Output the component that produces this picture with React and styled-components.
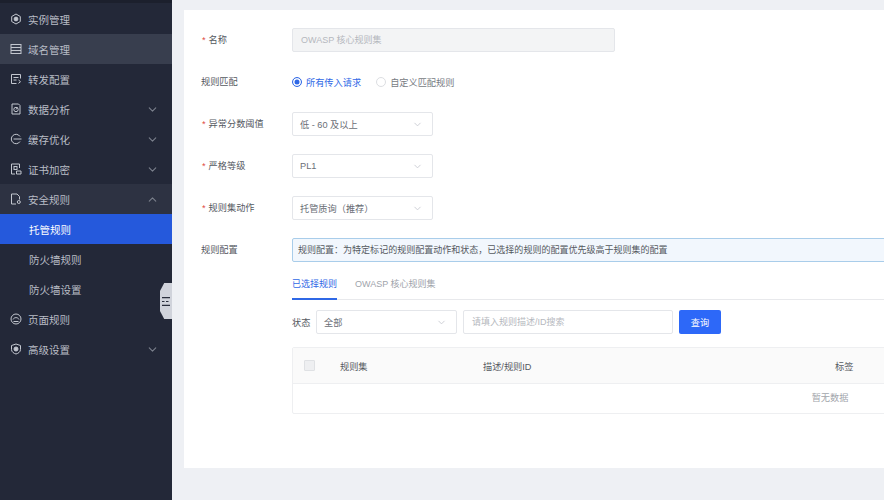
import React from 'react'
import styled, { createGlobalStyle } from 'styled-components'
import { ChevronDown, ChevronUp } from 'lucide-react'

const Global = createGlobalStyle`
  html, body {
    margin: 0;
    padding: 0;
    height: 100%;
    overflow: hidden;
  }
  * {
    box-sizing: border-box;
  }
  body {
    font-family: "Liberation Sans", "Noto Sans CJK SC", sans-serif;
    font-size: 9px;
    color: #555a63;
  }
`

const Page = styled.div`
  display: flex;
  width: 884px;
  height: 500px;
  overflow: hidden;
  background: #eef0f4;
`

const Sidebar = styled.nav`
  position: relative;
  flex: 0 0 172px;
  padding-top: 4px;
  background: #232838;
  border-top: 3px solid #1c202d;
`

const MenuRow = styled.div`
  display: flex;
  align-items: center;
  height: 30px;
  margin-top: ${p => (p.$first ? '-3px' : '0')};
  padding: 0 13px 0 10px;
  font-size: 10.5px;
  color: ${p => (p.$active ? '#ffffff' : '#b9bdc6')};
  background: ${p => {
    if (p.$active) return '#2559dc'
    if (p.$hover) return '#383e4e'
    if (p.$open) return '#2d3242'
    return 'transparent'
  }};
  padding-left: ${p => (p.$sub ? '29px' : '10px')};

  svg.lead {
    flex: 0 0 12px;
    margin-right: 6px;
  }
  span {
    flex: 1;
  }
`

const Collapse = styled.div`
  position: absolute;
  right: 0;
  top: 280px;
  width: 12px;
  height: 36px;
  display: flex;
  align-items: center;
  justify-content: center;
  background: #d0d3db;
  clip-path: polygon(100% 0, 35% 0, 0 22%, 0 78%, 35% 100%, 100% 100%);
`

const Main = styled.main`
  flex: 1;
  min-width: 0;
  padding: 10px 0 32px 12px;
  overflow: hidden;
`

const Card = styled.section`
  height: 458px;
  padding: 18px 0 0 17px;
  background: #ffffff;
  display: flex;
  flex-direction: column;
  gap: 18px;
  overflow: hidden;
`

const FormRow = styled.div`
  display: flex;
  align-items: flex-start;
`

const Label = styled.label`
  flex: 0 0 91px;
  height: 24px;
  line-height: 24px;
  color: #55595f;
  font-size: 9.2px;

  &::before {
    content: ${p => (p.$required ? '"*"' : 'none')};
    color: #e0493f;
    margin-right: 3px;
    margin-left: 1px;
  }
`

const TextInput = styled.div`
  width: ${p => p.$width}px;
  height: 24px;
  line-height: 22px;
  padding: 0 8px;
  border: 1px solid #e4e6ea;
  border-radius: 2px;
  font-size: 9px;
  color: ${p => (p.$muted ? '#b5b8be' : '#5f636b')};
  background: ${p => (p.$disabled ? '#f3f4f5' : '#ffffff')};
`

const Select = styled.div`
  width: ${p => p.$width}px;
  height: 24px;
  display: flex;
  align-items: center;
  justify-content: space-between;
  padding: 0 9px 0 7px;
  border: 1px solid #e4e6ea;
  border-radius: 2px;
  background: #ffffff;
  font-size: 9.2px;
  color: #6a6e76;

  svg {
    color: #c9ccd2;
  }
`

const RadioGroup = styled.div`
  display: flex;
  align-items: center;
  height: 24px;
  gap: 15px;
`

const Radio = styled.div`
  display: flex;
  align-items: center;
  gap: 4px;
  font-size: 9.2px;
  color: ${p => (p.$checked ? '#2f68e6' : '#777b83')};

  i {
    display: block;
    width: 10px;
    height: 10px;
    border-radius: 50%;
    background: #ffffff;
    border: 1px solid ${p => (p.$checked ? '#2f68e6' : '#dcdee2')};
    box-shadow: ${p => (p.$checked ? 'inset 0 0 0 1.5px #fff, inset 0 0 0 5px #2f68e6' : 'none')};
  }
`

const RuleConfig = styled.div`
  flex: 0 0 1076px;
  width: 1076px;
`

const Alert = styled.div`
  height: 24px;
  line-height: 22px;
  padding: 0 5px;
  border: 1px solid #a9cdea;
  border-radius: 2px;
  background: #f2f7fd;
  font-size: 9.03px;
  color: #55595f;
`

const Tabs = styled.div`
  display: flex;
  gap: 18px;
  height: 38px;
  border-bottom: 1px solid #e8e9ec;
`

const Tab = styled.div`
  padding-top: 15px;
  height: 38px;
  font-size: 9px;
  line-height: 15px;
  color: ${p => (p.$active ? '#2f68e6' : '#a0a4ab')};
  border-bottom: 2px solid ${p => (p.$active ? '#2f68e6' : 'transparent')};
`

const Filters = styled.div`
  display: flex;
  align-items: center;
  margin-top: 10px;
  gap: 6px;
  font-size: 9.2px;
  color: #55595f;
`

const FilterLabel = styled.span`
  width: 18px;
  white-space: nowrap;
`

const QueryButton = styled.button`
  width: 42px;
  height: 24px;
  padding: 0;
  border: 0;
  border-radius: 2px;
  background: #2d68f8;
  color: #ffffff;
  font: inherit;
  font-size: 9.2px;
`

const Table = styled.div`
  margin-top: 13px;
  border: 1px solid #eeeff1;
  border-radius: 2px;
`

const HeadRow = styled.div`
  display: grid;
  grid-template-columns: 47px 143px 352px 1fr;
  align-items: center;
  height: 36px;
  background: #fafafa;
  border-bottom: 1px solid #eeeff1;
  font-size: 9.2px;
  color: #55595f;
`

const Check = styled.div`
  width: 11px;
  height: 11px;
  margin-left: 11px;
  border: 1px solid #dfe1e4;
  border-radius: 1px;
  background: #eeeff1;
`

const Empty = styled.div`
  height: 29px;
  line-height: 29px;
  text-align: center;
  font-size: 9.2px;
  color: #a2a5ab;
`

const Icon = ({ children }) => (
  <svg className="lead" width="12" height="12" viewBox="0 0 12 12" fill="none" stroke="#c3c7cf" strokeWidth="1">
    {children}
  </svg>
)

const icons = {
  instance: (
    <Icon>
      <path d="M6 1l4.300 2.500v5L6 11 1.700 8.500v-5z" />
      <circle cx="6" cy="6" r="1.900" fill="#c3c7cf" />
    </Icon>
  ),
  domain: (
    <Icon>
      <rect x="1" y="1.500" width="10" height="9" />
      <path d="M1 4.500h10M1 7.500h10" />
    </Icon>
  ),
  forward: (
    <Icon>
      <path d="M10.500 5.500v-4h-9v9h5" />
      <path d="M3.500 4.500h5M3.500 7h3M8.500 7l2 1.700-2 1.700" />
    </Icon>
  ),
  data: (
    <Icon>
      <path d="M2 1h6.500L10 2.500V11H2z" />
      <circle cx="6" cy="6.500" r="2.200" />
      <path d="M6 6.500l1.500-2" />
    </Icon>
  ),
  cache: (
    <Icon>
      <path d="M10 3.500A4.700 4.700 0 1 0 10 8.500" />
      <path d="M3.500 6h8" />
    </Icon>
  ),
  cert: (
    <Icon>
      <path d="M9.500 5V1h-8v10h3.500" />
      <rect x="4" y="3.500" width="3" height="3" />
      <path d="M6.500 8h4.500v3H6.500z" />
    </Icon>
  ),
  security: (
    <Icon>
      <path d="M6 11H1.500V1H7l2.500 2.500V6.500" />
      <circle cx="8.800" cy="9" r="1.500" />
    </Icon>
  ),
  page: (
    <Icon>
      <circle cx="6" cy="6" r="5" />
      <path d="M3 6.500c1-2.500 5-2.500 6 0M3.500 8.500h5" />
    </Icon>
  ),
  advanced: (
    <Icon>
      <path d="M6 1l4.500 1.500v4C10.500 9 8 10.500 6 11 4 10.500 1.500 9 1.500 6.500v-4z" />
      <circle cx="6" cy="6" r="2" fill="#c3c7cf" />
    </Icon>
  ),
}

const Arrow = ({ up }) =>
  up ? <ChevronUp size={13} color="#7b808c" /> : <ChevronDown size={13} color="#7b808c" />

const menu = [
  { icon: 'instance', text: '实例管理' },
  { icon: 'domain', text: '域名管理', hover: true },
  { icon: 'forward', text: '转发配置' },
  { icon: 'data', text: '数据分析', arrow: true },
  { icon: 'cache', text: '缓存优化', arrow: true },
  { icon: 'cert', text: '证书加密', arrow: true },
  { icon: 'security', text: '安全规则', up: true, open: true },
  { text: '托管规则', sub: true, active: true },
  { text: '防火墙规则', sub: true },
  { text: '防火墙设置', sub: true },
  { icon: 'page', text: '页面规则' },
  { icon: 'advanced', text: '高级设置', arrow: true },
]

export default function App() {
  return (
    <Page>
      <Global />
      <Sidebar>
        {menu.map((m, i) => (
          <MenuRow key={m.text} $first={i === 0} $hover={m.hover} $open={m.open} $active={m.active} $sub={m.sub}>
            {m.icon && icons[m.icon]}
            <span>{m.text}</span>
            {m.arrow && <Arrow />}
            {m.up && <Arrow up />}
          </MenuRow>
        ))}
        <Collapse>
          <svg width="8" height="9" viewBox="0 0 8 9" fill="none" stroke="#2a2f3d" strokeWidth="1.200">
            <path d="M0 .6h8M0 8.400h8" />
            <path d="M0 4.500h8" strokeDasharray="2.500 1.500" />
          </svg>
        </Collapse>
      </Sidebar>
      <Main>
        <Card>
          <FormRow>
            <Label $required>名称</Label>
            <TextInput $width={323} $disabled $muted>OWASP 核心规则集</TextInput>
          </FormRow>
          <FormRow>
            <Label>规则匹配</Label>
            <RadioGroup>
              <Radio $checked><i />所有传入请求</Radio>
              <Radio><i />自定义匹配规则</Radio>
            </RadioGroup>
          </FormRow>
          <FormRow>
            <Label $required>异常分数阈值</Label>
            <Select $width={141}>低 - 60 及以上<ChevronDown size={11} /></Select>
          </FormRow>
          <FormRow>
            <Label $required>严格等级</Label>
            <Select $width={141}>PL1<ChevronDown size={11} /></Select>
          </FormRow>
          <FormRow>
            <Label $required>规则集动作</Label>
            <Select $width={141}>托管质询（推荐）<ChevronDown size={11} /></Select>
          </FormRow>
          <FormRow>
            <Label>规则配置</Label>
            <RuleConfig>
              <Alert>规则配置：为特定标记的规则配置动作和状态，已选择的规则的配置优先级高于规则集的配置</Alert>
              <Tabs>
                <Tab $active>已选择规则</Tab>
                <Tab>OWASP 核心规则集</Tab>
              </Tabs>
              <Filters>
                <FilterLabel>状态</FilterLabel>
                <Select $width={141}>全部<ChevronDown size={11} /></Select>
                <TextInput $width={210} $muted>请填入规则描述/ID搜索</TextInput>
                <QueryButton>查询</QueryButton>
              </Filters>
              <Table>
                <HeadRow>
                  <Check />
                  <div>规则集</div>
                  <div>描述/规则ID</div>
                  <div>标签</div>
                </HeadRow>
                <Empty>暂无数据</Empty>
              </Table>
            </RuleConfig>
          </FormRow>
        </Card>
      </Main>
    </Page>
  )
}
